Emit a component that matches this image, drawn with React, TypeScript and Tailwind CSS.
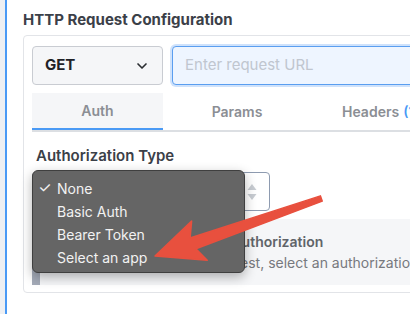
import { ChevronDown } from 'lucide-react';

const authOptions = ['None', 'Basic Auth', 'Bearer Token', 'Select an app'];

function Tabs() {
    return (
        <div className="flex mt-2 border-b-2 border-[#dcdfe3] text-[14px] font-semibold text-[#8b8e94]">
            <div className="w-[131px] h-[37px] flex items-center justify-center bg-[#f5f6f8] border-b-2 border-[#4a9af5] -mb-[2px]">
                Auth
            </div>
            <div className="w-[148px] h-[37px] flex items-center justify-center">Params</div>
            <div className="flex-1 h-[37px] flex items-center pl-[31px] whitespace-nowrap">
                Headers <span className="ml-1 text-[#4a9af5]">(1)</span>
            </div>
        </div>
    );
}

export default function App() {
    return (
        <div className="relative w-[410px] h-[314px] overflow-hidden bg-white font-['Inter',sans-serif] flex">
            {/* left rail */}
            <div className="w-[5px] bg-[#eef0f3] shrink-0" />
            <div className="w-[2px] bg-[#4a9af5] shrink-0" />

            <div className="pl-4 pt-[9px] shrink-0">
                <h3 className="text-[15px] leading-[22px] font-bold text-[#3b4048] mb-[4px]">
                    HTTP Request Configuration
                </h3>

                <div className="w-[488px] border border-[#e2e4e8] rounded-[4px] px-[8px] pt-[10px] pb-[7px]">
                    {/* method + url */}
                    <div className="flex gap-[9px]">
                        <div className="w-[131px] h-[39px] shrink-0 flex items-center justify-between pl-3 pr-3 bg-[#f5f6f8] border border-[#c9ccd2] rounded-[4px]">
                            <span className="text-[15px] font-bold text-[#1f2227]">GET</span>
                            <ChevronDown className="w-4 h-4 text-[#2a2d31]" strokeWidth={2.5} />
                        </div>
                        <div className="flex-1 h-[39px] flex items-center pl-3 bg-[#eef5ff] border border-[#5a9ef0] rounded-[4px] ring-2 ring-[#cfe2fb]">
                            <span className="text-[15px] text-[#c0c6cf]">Enter request URL</span>
                        </div>
                    </div>

                    <Tabs />

                    <div className="pl-[4px] pt-[13px] text-[15px] leading-[22px] font-semibold text-[#3b4048]">
                        Authorization Type
                    </div>

                    <div className="mt-[5px] w-[238px] h-[39px] border border-[#8e9bb0] rounded-[4px] bg-white flex items-center justify-end pr-[12px]">
                        <svg width="10" height="18" viewBox="0 0 10 18" className="text-[#c8ccd2]">
                            <path d="M5 1 L9.5 7 H0.5 Z" fill="currentColor" />
                            <path d="M5 17 L9.5 11 H0.5 Z" fill="currentColor" />
                        </svg>
                    </div>

                    <div className="mt-[8px] h-[66px] bg-[#f5f6f8] border-l-[8px] border-[#a4abb8] flex flex-col items-center justify-center pr-[10px]">
                        <div className="text-[14px] font-semibold text-[#606469] leading-[21px]">No Authorization</div>
                        <div className="text-[14px] text-[#77797e] leading-[21px] whitespace-nowrap">
                            To authenticate this request, select an authorization type.
                        </div>
                    </div>
                </div>

                <div className="mt-[18px] text-[15px] font-bold text-[#3b4048]">Optional Fields</div>
            </div>

            {/* native select popup */}
            <div className="absolute left-[32px] top-[170px] w-[213px] h-[103px] rounded-[6px] bg-[#656565] border border-[#3f3f3f] shadow-[0_4px_12px_rgba(0,0,0,0.3)] pt-[6px]">
                {authOptions.map((opt, idx) => (
                    <div key={opt} className="h-[23px] flex items-center text-[14px] text-[#f2f2f2]">
                        <span className="w-[24px] text-center text-[15px]">{idx === 0 ? '✓' : ''}</span>
                        {opt}
                    </div>
                ))}
            </div>

            {/* annotation arrow */}
            <svg className="absolute inset-0 pointer-events-none" width="410" height="314">
                <g transform="translate(155 256) rotate(-19.06)">
                    <polygon
                        points="0,0 46,-21 39,-5.5 176,-2.8 176,2.8 41,6.5 48,21"
                        fill="#e8503e"
                        stroke="#e8503e"
                        strokeWidth="1.5"
                        strokeLinejoin="round"
                    />
                </g>
            </svg>
        </div>
    );
}
